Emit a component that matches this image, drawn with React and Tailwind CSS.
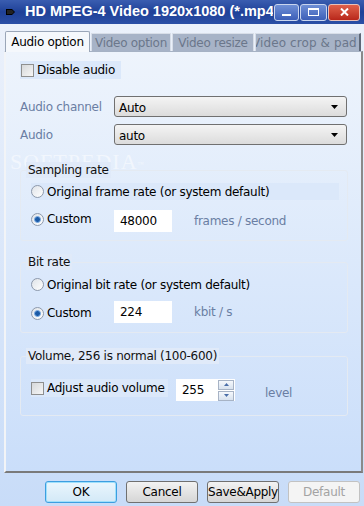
import React from "react";

const F = { fontFamily: '"DejaVu Sans", Verdana, sans-serif', letterSpacing: "-0.28px" };

function Radio({ checked }) {
  return (
    <div className="w-[13px] h-[13px] rounded-full border border-[#8d99ab] bg-gradient-to-br from-[#dfe3e8] to-[#ffffff] flex items-center justify-center shrink-0">
      {checked && (
        <div className="w-[7px] h-[7px] rounded-full bg-[#1b5aa6] border border-[#7fb0e6]" />
      )}
    </div>
  );
}

function Check() {
  return (
    <div className="w-[13px] h-[13px] border border-[#8e8f8f] bg-gradient-to-br from-[#d6d8da] to-[#f6f6f6] shrink-0" />
  );
}

function Select({ value }) {
  return (
    <div className="w-[233px] h-[21px] border border-[#707070] rounded-[3px] bg-gradient-to-b from-[#f4f4f4] to-[#dcdcdc] flex items-center justify-between pl-[4px] pr-[8px] text-[12px] text-black">
      <span className="mt-[2px]">{value}</span>
      <svg width="7" height="4" viewBox="0 0 7 4"><path d="M0 0h7L3.5 4z" fill="#000" /></svg>
    </div>
  );
}

function Group({ legend, children }) {
  return (
    <div className="relative ml-[14px] w-[328px] border border-[#e4eaf2] rounded-[3px]">
      <div className="absolute -top-[9px] left-[5px] px-[2px] bg-[#e0eaf9] text-[12px] text-[#111] leading-[16px] whitespace-nowrap">{legend}</div>
      {children}
    </div>
  );
}

function Btn({ children, variant }) {
  let cls = "w-[72px] h-[22px] rounded-[3px] flex items-center justify-center text-[12px] ";
  if (variant === "ok") cls += "border border-[#3c9ee0] ring-1 ring-inset ring-[#9fe0fb] bg-gradient-to-b from-[#eaf6fd] to-[#d3e9f7] text-black";
  else if (variant === "dis") cls += "border border-[#c2c2c2] bg-[#f4f4f4] text-[#a3a3a3]";
  else cls += "border border-[#707070] bg-gradient-to-b from-[#f2f2f2] to-[#d6d6d6] text-black";
  return <div className={cls}>{children}</div>;
}

export default function App() {
  return (
    <div style={F} className="w-[364px] h-[506px] overflow-hidden flex flex-col bg-gradient-to-b from-[#edf2fb] to-[#c8dcf8] select-none">
      {/* Title bar */}
      <div className="h-[24px] shrink-0 flex items-center bg-gradient-to-b from-[#3a5db0] via-[#1f4198] to-[#2b4fa6] relative">
        <svg className="ml-[6px]" width="10" height="8" viewBox="0 0 10 8"><path d="M0 1h6l3 3-3 3H0z" fill="#000" /><path d="M1 2h5l2 2-2 2H1z" fill="#222" /></svg>
        <span style={{ fontFamily: '"Liberation Sans", Arial, sans-serif', letterSpacing: "0px" }} className="ml-[9px] text-white font-bold text-[14.5px] whitespace-nowrap overflow-hidden w-[248px]">HD MPEG-4 Video 1920x1080 (*.mp4)</span>
        <div className="flex ml-[1px] gap-[1px]">
          <div className="w-[25px] h-[17px] rounded-[3px] border border-[#c9d5ee] bg-gradient-to-b from-[#6f8fd6] to-[#3d5fb8] flex items-end justify-center pb-[4px]">
            <div className="w-[9px] h-[2px] bg-white" />
          </div>
          <div className="w-[27px] h-[17px] rounded-[3px] border border-[#c9d5ee] bg-gradient-to-b from-[#6f8fd6] to-[#3d5fb8] flex items-center justify-center">
            <div className="w-[11px] h-[8px] border border-white border-t-2" />
          </div>
          <div className="w-[32px] h-[17px] rounded-[3px] border border-[#e8c0b8] bg-gradient-to-b from-[#e0604a] to-[#b8261a] flex items-center justify-center">
            <svg width="9" height="8" viewBox="0 0 9 8"><path d="M1 0.5l7 7M8 0.5l-7 7" stroke="#fff" strokeWidth="2" /></svg>
          </div>
        </div>
      </div>

      {/* Tabs */}
      <div className="mt-[7px] ml-[5px] flex items-end h-[20px] shrink-0 text-[12px]">
        <div className="w-[85px] h-[21px] bg-[#f5f8fc] border border-[#9aa6b8] border-b-0 rounded-t-[2px] flex items-center justify-center text-black relative z-10 -mb-[1px]">Audio option</div>
        <div className="ml-[1px] w-[80px] h-[18px] bg-[#a7b3c7] border border-[#d8dee8] border-b-0 flex items-center justify-center text-[#6b778b]">Video option</div>
        <div className="ml-[1px] w-[82px] h-[18px] bg-[#a7b3c7] border border-[#d8dee8] border-b-0 flex items-center justify-center text-[#6b778b]">Video resize</div>
        <div className="ml-[1px] w-[106px] h-[18px] bg-[#a7b3c7] border border-[#d8dee8] border-b-0 border-r-[#5e6878] border-r-2 overflow-hidden flex items-center text-[#6b778b] whitespace-nowrap">
          <span className="-ml-[4px] tracking-[0.1px]">Video crop &amp; pad</span>
        </div>
      </div>

      {/* Panel */}
      <div className="relative ml-[4px] w-[359px] h-[422px] shrink-0 border-t border-t-[#a6b2c4] border-l-2 border-l-[#f2f4f7] border-r-2 border-r-[#8a8a8a] border-b-2 border-b-[#7a7a7a] bg-gradient-to-b from-[#eef4fc] to-[#cadefa] flex flex-col text-[12px]">
        <div style={{ fontFamily: '"Liberation Serif", serif' }} className="absolute left-[4px] top-[99px] text-[22px] tracking-[1px] text-white/50 leading-none whitespace-nowrap">SOFTPEDIA<sup className="text-[6px]">™</sup></div>

        <div className="mt-[9px] ml-[14px] w-[101px] h-[18px] bg-[#dbe8fa] flex items-center gap-[3px] pl-[1px]">
          <Check />
          <span className="text-black">Disable audio</span>
        </div>

        <div className="mt-[17px] ml-[14px] flex items-center">
          <span className="w-[94px] text-[#6a7ea3]">Audio channel</span>
          <Select value="Auto" />
        </div>
        <div className="mt-[7px] ml-[14px] flex items-center">
          <span className="w-[94px] text-[#6a7ea3]">Audio</span>
          <Select value="auto" />
        </div>

        <div className="mt-[25px]">
          <Group legend="Sampling rate">
            <div className="mt-[12px] ml-[10px] w-[308px] h-[17px] bg-[#dbe8fa] flex items-center gap-[3px]">
              <Radio />
              <span className="text-black">Original frame rate (or system default)</span>
            </div>
            <div className="mt-[10px] ml-[10px] flex items-center h-[22px] mb-[8px]">
              <div className="w-[83px] flex items-center gap-[3px] -mt-[4px]">
                <Radio checked />
                <span className="text-black">Custom</span>
              </div>
              <div className="w-[58px] h-[22px] bg-white flex items-center pl-[6px] text-black">48000</div>
              <span className="ml-[22px] text-[#6a7ea3]">frames / second</span>
            </div>
          </Group>
        </div>

        <div className="mt-[21px]">
          <Group legend="Bit rate">
            <div className="mt-[13px] ml-[10px] h-[17px] flex items-center gap-[3px]">
              <Radio />
              <span className="text-black">Original bit rate (or system default)</span>
            </div>
            <div className="mt-[8px] ml-[10px] flex items-center h-[22px] mb-[9px]">
              <div className="w-[83px] flex items-center gap-[3px] mt-[2px]">
                <Radio checked />
                <span className="text-black">Custom</span>
              </div>
              <div className="w-[58px] h-[22px] bg-white flex items-start pt-[2px] pl-[6px] text-black">224</div>
              <span className="ml-[22px] text-[#6a7ea3]">kbit / s</span>
            </div>
          </Group>
        </div>

        <div className="mt-[23px]">
          <Group legend="Volume, 256 is normal (100-600)">
            <div className="mt-[21px] ml-[10px] flex items-center mb-[13px]">
              <div className="w-[137px] h-[18px] bg-[#dbe8fa] flex items-center gap-[3px] -mt-[4px] whitespace-nowrap">
                <Check />
                <span className="text-black">Adjust audio volume</span>
              </div>
              <div className="ml-[8px] w-[59px] h-[22px] bg-white flex items-center">
                <span className="pl-[6px] w-[42px] text-black">255</span>
                <div className="flex flex-col gap-[1px]">
                  <div className="w-[16px] h-[10px] border border-[#a7b3c5] bg-gradient-to-b from-[#f5f8fc] to-[#d8e2ee] flex items-center justify-center">
                    <svg width="5" height="3" viewBox="0 0 5 3"><path d="M2.5 0L5 3H0z" fill="#4a6ea8" /></svg>
                  </div>
                  <div className="w-[16px] h-[10px] border border-[#a7b3c5] bg-gradient-to-b from-[#f5f8fc] to-[#d8e2ee] flex items-center justify-center">
                    <svg width="5" height="3" viewBox="0 0 5 3"><path d="M0 0h5L2.5 3z" fill="#4a6ea8" /></svg>
                  </div>
                </div>
              </div>
              <span className="ml-[30px] mt-[6px] text-[#6a7ea3]">level</span>
            </div>
          </Group>
        </div>
      </div>

      {/* Buttons */}
      <div className="mt-[8px] ml-[45px] flex gap-[9px]">
        <Btn variant="ok">OK</Btn>
        <Btn>Cancel</Btn>
        <Btn>Save&amp;Apply</Btn>
        <Btn variant="dis">Default</Btn>
      </div>
    </div>
  );
}
